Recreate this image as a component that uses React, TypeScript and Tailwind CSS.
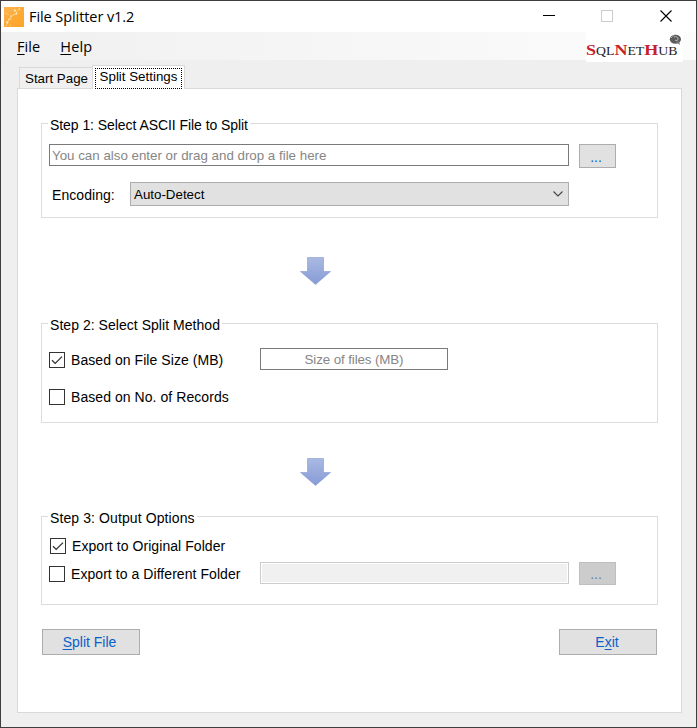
import React, { useState } from 'react'

function AppIcon() {
  return (
    <svg width="20" height="20" viewBox="0 0 20 20" className="shrink-0">
      <defs>
        <linearGradient id="app-icon" x1="0" y1="0" x2="0.6" y2="1">
          <stop offset="0" stopColor="#ffb552" />
          <stop offset="0.5" stopColor="#fdab38" />
          <stop offset="1" stopColor="#fda62c" />
        </linearGradient>
      </defs>
      <rect width="20" height="20" fill="url(#app-icon)" />
      <g fill="none" stroke="#ffe2b4" strokeOpacity="0.65">
        <path d="M2 19c1-2 2-3 2-5s2-2 3-4 2-2 4-3 2-3 4-5" strokeWidth="0.9" />
        <path d="M2 15l3 0M5 12l3 0M9 8l4-1M11 5l-1-2M3 7l2 1" strokeWidth="0.8" />
      </g>
      <g fill="#fff3dc">
        <circle cx="3" cy="15.5" r="0.9" />
        <circle cx="5" cy="12.5" r="0.7" />
        <circle cx="11" cy="3.5" r="0.9" />
        <circle cx="12.5" cy="6.5" r="0.8" />
        <circle cx="15.5" cy="2" r="0.7" />
        <circle cx="2" cy="6" r="0.5" />
        <circle cx="7" cy="9" r="0.7" />
        <circle cx="6" cy="18" r="0.5" />
      </g>
    </svg>
  )
}

function Logo() {
  return (
    <div className="relative h-[30px] w-[97px] bg-white font-['Liberation_Serif',serif] tracking-normal">
      <div className="flex h-[30px] origin-left scale-x-[1.2] items-baseline pt-[6px] leading-[24px] whitespace-nowrap">
        <span className="text-[15px] font-bold text-[#c8202c]">S</span>
        <span className="text-[11.5px] text-[#222]">QL</span>
        <span className="text-[15px] font-bold text-[#c8202c]">N</span>
        <span className="text-[11.5px] text-[#222]">ET</span>
        <span className="text-[15px] font-bold text-[#c8202c]">H</span>
        <span className="text-[11.5px] text-[#222]">UB</span>
      </div>
      <svg width="13" height="12" viewBox="0 0 13 12" className="absolute top-[2px] right-px">
        <ellipse cx="6.4" cy="5.2" rx="5.6" ry="4.5" fill="#5c5c5c" />
        <path d="M7 8l4 3-1-4z" fill="#777" />
        <path d="M5 3c2-1 4 0 4 2s-2 2-3 1M2 4c1-2 2-2 3-3" fill="none" stroke="#b9b9b9" />
      </svg>
    </div>
  )
}

function DownArrow({ id }: { id: string }) {
  return (
    <svg width="31" height="28" viewBox="0 0 31 28" className="ml-[282px] block">
      <defs>
        <linearGradient id={id} x1="0" y1="0" x2="0" y2="1">
          <stop offset="0" stopColor="#a9b9e2" />
          <stop offset="1" stopColor="#879bd6" />
        </linearGradient>
      </defs>
      <path
        d="M7.5 0.5H23.5V14.5H30.5L15.5 27.5L0.5 14.5H7.5Z"
        fill={`url(#${id})`}
        stroke="#7f93cf"
        strokeOpacity="0.55"
      />
    </svg>
  )
}

type CheckProps = {
  label: string
  checked: boolean
  onChange: () => void
  className?: string
}

function Check({ label, checked, onChange, className = '' }: CheckProps) {
  return (
    <button
      type="button"
      role="checkbox"
      aria-checked={checked}
      onClick={onChange}
      className={`flex h-4 items-center gap-[6px] text-[14px] tracking-[0.06px] whitespace-nowrap ${className}`}
    >
      <span className="block size-4 border border-[#333] bg-white">
        {checked && (
          <svg width="14" height="14" viewBox="0 0 14 14">
            <path d="M2 7.2L5.2 10.4L12 3.6" fill="none" stroke="#333" strokeWidth="1.3" />
          </svg>
        )}
      </span>
      <span>{label}</span>
    </button>
  )
}

export default function App() {
  const [method, setMethod] = useState<'size' | 'records'>('size')
  const [output, setOutput] = useState<'original' | 'different'>('original')

  return (
    <div className="flex h-[728px] w-[697px] flex-col overflow-hidden border border-[#3f3d3f] bg-[#efefef] font-['Liberation_Sans',Arial,sans-serif] text-[13.33px] leading-[15px] text-black">
      {/* Title bar */}
      <div className="flex h-[31px] shrink-0 items-center bg-white pl-[3px]">
        <AppIcon />
        <span className="ml-[5px] font-['Open_Sans',sans-serif] text-[14.5px] tracking-[-0.08px]">File Splitter v1.2</span>
        <svg width="142" height="13" viewBox="0 0 142 13" className="mr-[15px] ml-auto" fill="none">
          <path d="M4 5.5H16" stroke="#000" />
          <rect x="62.5" y="0.5" width="11" height="11" stroke="#ccc" />
          <path d="M121.5 0.5L132.5 11.5M132.5 0.5L121.5 11.5" stroke="#000" strokeWidth="1.1" />
        </svg>
      </div>

      {/* Menu */}
      <div className="flex h-7 shrink-0 items-center bg-linear-to-r from-[#f0f0f0] to-[#fcfcfc] pl-4 font-['Open_Sans',sans-serif] text-[14.5px] tracking-[0.1px]">
        <span><u className="underline-offset-2">F</u>ile</span>
        <span className="ml-5"><u className="underline-offset-2">H</u>elp</span>
        <div className="mr-[13px] ml-auto h-7">
          <Logo />
        </div>
      </div>

      {/* Tabs */}
      <div className="relative z-10 mt-[5px] -mb-px flex h-6 shrink-0 items-end pl-[18px]">
        <div className="flex h-[22px] w-[73px] items-center justify-center border border-r-0 border-[#d9d9d9] bg-[#f0f0f0] pl-px whitespace-nowrap">
          Start Page
        </div>
        <div className="h-6 w-[93px] border border-b-0 border-[#d9d9d9] bg-white px-[2px] pt-[2px]">
          <div className="flex h-[21px] items-center justify-center border border-dotted border-black pb-[5px] whitespace-nowrap">
            Split Settings
          </div>
        </div>
      </div>

      <div className="ml-4 h-[625px] w-[665px] shrink-0 border border-[#d9d9d9] bg-white pt-[27px]">
        <fieldset className="ml-[23px] h-[102px] w-[617px] border border-[#dcdcdc]">
          <legend className="ml-[6px] h-[15px] px-[2px] pt-[2px] text-[14px] tracking-[-0.06px]">Step 1: Select ASCII File to Split</legend>
          <div className="flex items-start gap-[10px] pt-[13px] pl-[7px]">
            <input
              className="h-[22px] w-[520px] border border-[#7a7a7a] bg-white px-[2px] placeholder:text-[#868686] placeholder:opacity-100"
              placeholder="You can also enter or drag and drop a file here"
            />
            <button className="h-6 w-[37px] border border-[#adadad] bg-[#e1e1e1] pt-[2px] pr-[3px] text-[14px] text-[#0a5fc8]">...</button>
          </div>
          <div className="mt-[14px] flex items-center pl-[10px]">
            <span className="w-[78px] pt-[2px] text-[14px] tracking-[0.06px]">Encoding:</span>
            <button className="flex h-6 w-[439px] items-center justify-between border border-[#adadad] bg-[#e1e1e1] pr-[5px] pl-[3px]">
              <span>Auto-Detect</span>
              <svg width="10" height="6" viewBox="0 0 10 6" fill="none">
                <path d="M0.5 0.5L5 5L9.5 0.5" stroke="#444" strokeWidth="1.1" />
              </svg>
            </button>
          </div>
        </fieldset>

        <div className="mt-[39px]">
          <DownArrow id="arrow-method" />
        </div>

        <fieldset className="mt-[31px] ml-[23px] h-[107px] w-[617px] border border-[#dcdcdc]">
          <legend className="ml-[6px] h-[15px] px-[2px] pt-[2px] text-[14px] tracking-[0.04px]">Step 2: Select Split Method</legend>
          <div className="flex items-start pt-[17px] pl-[7px]">
            <Check
              className="mt-1 w-[211px]"
              label="Based on File Size (MB)"
              checked={method === 'size'}
              onChange={() => setMethod('size')}
            />
            <input
              className="h-[22px] w-[188px] border border-[#7a7a7a] bg-white text-center placeholder:tracking-[-0.1px] placeholder:text-[#868686] placeholder:opacity-100"
              placeholder="Size of files (MB)"
            />
          </div>
          <Check
            className="mt-[19px] ml-[7px]"
            label="Based on No. of Records"
            checked={method === 'records'}
            onChange={() => setMethod('records')}
          />
        </fieldset>

        <div className="mt-[35px]">
          <DownArrow id="arrow-output" />
        </div>

        <fieldset className="mt-[23px] ml-[23px] h-[96px] w-[617px] border border-[#dcdcdc]">
          <legend className="ml-[6px] h-[15px] px-[2px] pt-[2px] text-[14px] tracking-[0.1px]">Step 3: Output Options</legend>
          <Check
            className="mt-[14px] ml-2"
            label="Export to Original Folder"
            checked={output === 'original'}
            onChange={() => setOutput('original')}
          />
          <div className="mt-2 flex items-start pl-[7px]">
            <Check
              className="mt-1 w-[211px]"
              label="Export to a Different Folder"
              checked={output === 'different'}
              onChange={() => setOutput('different')}
            />
            <div className="h-[22px] w-[309px] border border-[#ccc] bg-white p-px">
              <div className="h-full bg-[#f0f0f0]" />
            </div>
            <button className="ml-[10px] h-[23px] w-[37px] border border-[#bfbfbf] bg-[#ccc] pt-[2px] pr-[3px] text-[14px] text-[#5b7fae]">...</button>
          </div>
        </fieldset>

        <div className="mt-6 mr-6 ml-6 flex justify-between text-[14px] text-[#0a5fc8]">
          <button className="h-[26px] w-[98px] border border-[#adadad] bg-[#e1e1e1] pr-[3px]">
            <u className="underline-offset-2">S</u>plit File
          </button>
          <button className="h-[26px] w-[98px] border border-[#adadad] bg-[#e1e1e1] pr-[2px]">
            E<u className="underline-offset-2">x</u>it
          </button>
        </div>
      </div>
    </div>
  )
}
